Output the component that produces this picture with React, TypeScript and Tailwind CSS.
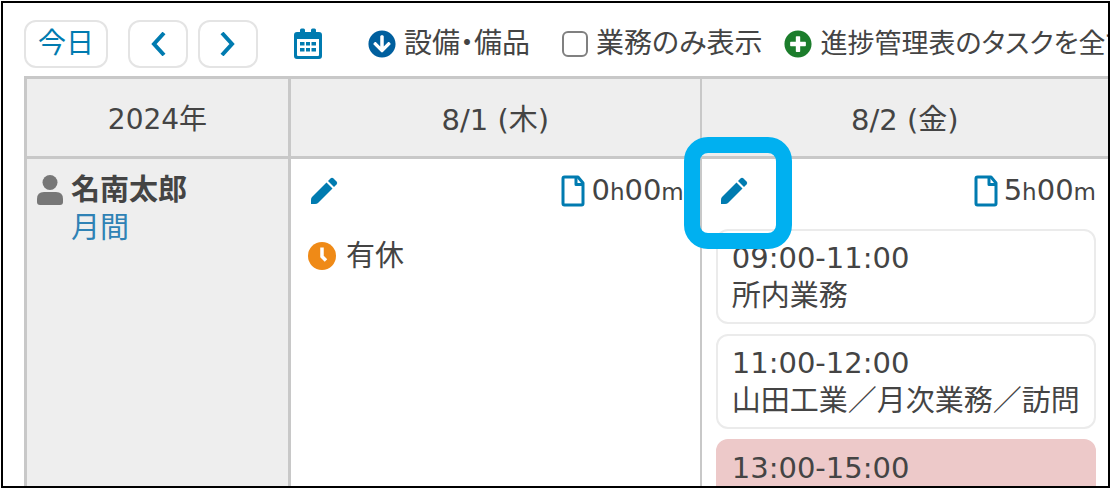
import type { ReactNode } from "react"
import { FaArrowCircleDown, FaPlusCircle } from "react-icons/fa"

type Plan = {
    time: string
    title: string
    highlighted?: boolean
}

const PLANS: Plan[] = [
    { time: "09:00-11:00", title: "所内業務" },
    { time: "11:00-12:00", title: "山田工業／月次業務／訪問" },
    { time: "13:00-15:00", title: "", highlighted: true },
]

function Chevron({ direction }: { direction: "left" | "right" }) {
    return (
        <svg viewBox="0 0 16 24" className="h-6 w-4" fill="none" stroke="currentColor" strokeWidth="4">
            <path d={direction === "left" ? "M14 1 4 12l10 11" : "M2 1l10 11L2 23"} />
        </svg>
    )
}

function CalendarIcon() {
    return (
        <svg viewBox="0 0 28 32" className="h-8 w-7" fill="currentColor">
            <path
                fillRule="evenodd"
                d="M6 2q0-1.500 1.500-1.500h2Q11 .5 11 2v2h6V2q0-1.500 1.500-1.500h2Q22 .5 22 2v2h3a3 3 0 0 1 3 3v21a3 3 0 0 1-3 3H3a3 3 0 0 1-3-3V7a3 3 0 0 1 3-3h3zM3 11v16a1 1 0 0 0 1 1h20a1 1 0 0 0 1-1V11z"
            />
            <path d="M6 14h4.500v3.500H6zM12 14h4v3.500h-4zM17.500 14H22v3.500h-4.500zM6 20h4.500v3.500H6zM12 20h4v3.500h-4zM17.500 20H22v3.500h-4.500z" />
        </svg>
    )
}

function PencilIcon() {
    return (
        <svg viewBox="0 0 28 28" className="size-7" fill="currentColor">
            <path d="M16.500 5.500l6 6L8 26q-1 1-3 1H1v-4q0-2 1-3z" />
            <path d="M18 4l2.500-2.500q1.500-1.500 3 0l3 3q1.500 1.500 0 3L24 10z" />
        </svg>
    )
}

function FileIcon() {
    return (
        <svg viewBox="0 0 24 32" className="h-8 w-6" fill="none" stroke="currentColor" strokeWidth="3" strokeLinejoin="round">
            <path d="M3.500 2Q2 2 2 3.500v25Q2 30 3.500 30h17q1.500 0 1.500-1.500V8l-5-6z" />
            <path d="M15 3v6.500h6" />
        </svg>
    )
}

function UserIcon() {
    return (
        <svg viewBox="0 0 26 30" className="h-[30px] w-[26px]" fill="currentColor">
            <circle cx="13" cy="7.500" r="7.500" />
            <path d="M7 17h12q7 0 7 7v3q0 3-3 3H3q-3 0-3-3v-3q0-7 7-7z" />
        </svg>
    )
}

function ClockIcon() {
    return (
        <svg viewBox="0 0 28 28" className="size-7" fill="none">
            <circle cx="14" cy="14" r="14" fill="#ef8a17" />
            <path d="M14 5.500V14.500L18 18.500" stroke="white" strokeWidth="3.500" />
        </svg>
    )
}

function ToolButton({ label, children }: { label: string; children: ReactNode }) {
    return (
        <button
            aria-label={label}
            className="flex h-12 shrink-0 items-center justify-center rounded-xl border-2 border-[#e4e4e4] px-5 text-[#007bb0]"
        >
            {children}
        </button>
    )
}

function DayHeader({ hours, marked }: { hours: string; marked?: boolean }) {
    return (
        <div className="flex h-16 items-center justify-between">
            <button aria-label="編集" className="relative ml-1 text-[#007bb0]">
                <PencilIcon />
                {marked && (
                    <span className="absolute -top-10 -right-11 -bottom-11 -left-9 rounded-[24px] border-16 border-[#00b0f0]" />
                )}
            </button>
            <span className="flex items-center gap-1.5">
                <span className="text-[#007bb0]">
                    <FileIcon />
                </span>
                <span>
                    {hours}
                    <span className="text-[23px]">h</span>00
                    <span className="text-[23px]">m</span>
                </span>
            </span>
        </div>
    )
}

function PlanCard({ plan }: { plan: Plan }) {
    return (
        <div
            className={
                plan.highlighted
                    ? "h-[95px] rounded-xl border-2 border-[#edc9c9] bg-[#edc9c9] px-3.5 py-2"
                    : "h-[95px] rounded-xl border-2 border-[#ebebeb] px-3.5 py-2"
            }
        >
            <p>{plan.time}</p>
            <p className="whitespace-nowrap">{plan.title}</p>
        </div>
    )
}

export default function App() {
    return (
        <div className="h-screen bg-white p-px">
            <main className="h-full overflow-hidden border-2 border-black pl-[21px] font-['DejaVu_Sans','Noto_Sans_CJK_JP',sans-serif] text-[29px] leading-[38px] text-[#444]">
                {/* Toolbar */}
                <div className="flex h-[73px] items-center overflow-hidden pt-2 text-[28px] whitespace-nowrap">
                    <button className="h-12 shrink-0 rounded-xl border-2 border-[#e4e4e4] px-3 text-[#007bb0]">今日</button>
                    <div className="ml-5 flex gap-2.5">
                        <ToolButton label="前へ">
                            <Chevron direction="left" />
                        </ToolButton>
                        <ToolButton label="次へ">
                            <Chevron direction="right" />
                        </ToolButton>
                    </div>
                    <button aria-label="カレンダー" className="ml-9 shrink-0 text-[#007bb0]">
                        <CalendarIcon />
                    </button>
                    <button className="ml-[46px] flex shrink-0 items-center gap-2 [font-feature-settings:'palt']">
                        <FaArrowCircleDown className="size-7 text-[#005f9e]" />
                        設備・備品
                    </button>
                    <label className="ml-8 flex shrink-0 items-center gap-2 [font-feature-settings:'palt']">
                        <input
                            type="checkbox"
                            className="size-[26px] appearance-none rounded-md border-2 border-[#808080] bg-white"
                        />
                        業務のみ表示
                    </label>
                    <button className="ml-[22px] flex shrink-0 items-center gap-2 text-[27px] [font-feature-settings:'palt']">
                        <FaPlusCircle className="size-7 text-[#1c7d2c]" />
                        進捗管理表のタスクを全て
                    </button>
                </div>

                {/* Schedule */}
                <table className="w-full table-fixed border-separate border-spacing-0 border-t-3 border-l-3 border-[#c8c8c8]">
                    <thead>
                        <tr className="h-20 bg-[#eee]">
                            <th className="w-[264px] border-r-3 border-b-3 border-[#c8c8c8] pt-1 text-[28px] font-normal">2024年</th>
                            <th className="w-[38%] border-r-2 border-b-3 border-[#c8c8c8] pt-1 font-normal">8/1 (木)</th>
                            <th className="border-b-3 border-[#c8c8c8] pt-1 font-normal">8/2 (金)</th>
                        </tr>
                    </thead>
                    <tbody>
                        <tr className="align-top">
                            <th className="border-r-3 border-[#c8c8c8] bg-[#eee] pt-3 pl-2.5 text-left font-normal">
                                <div className="flex gap-2">
                                    <span className="pt-1 text-[#777]">
                                        <UserIcon />
                                    </span>
                                    <div>
                                        <p className="font-bold">名南太郎</p>
                                        <a href="#month" className="text-[#2f82b5]">月間</a>
                                    </div>
                                </div>
                            </th>
                            <td className="border-r-2 border-[#c8c8c8] pr-4 pl-[15px]">
                                <DayHeader hours="0" />
                                <div className="flex items-center gap-2.5 pt-3.5 pl-0.5">
                                    <ClockIcon />
                                    有休
                                </div>
                            </td>
                            <td className="pr-3 pl-3.5">
                                <DayHeader hours="5" marked />
                                <div className="flex flex-col gap-2.5 pt-1.5">
                                    {PLANS.map((plan) => (
                                        <PlanCard key={plan.time} plan={plan} />
                                    ))}
                                </div>
                            </td>
                        </tr>
                    </tbody>
                </table>
            </main>
        </div>
    )
}
